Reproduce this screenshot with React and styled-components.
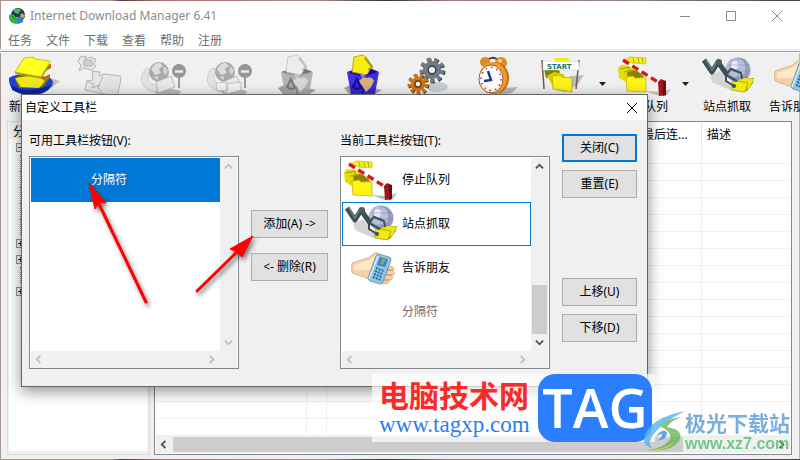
import React from "react";
import styled, { createGlobalStyle } from "styled-components";

const GlobalStyle = createGlobalStyle`
  * {
    box-sizing: border-box;
  }
  body {
    margin: 0;
    background: #a8968f;
    font-family: "Noto Sans", "Noto Sans CJK SC", sans-serif;
    font-size: 12px;
    line-height: 16px;
    color: #000;
  }
  button {
    font: inherit;
    color: inherit;
    padding: 0;
    border: none;
    background: none;
  }
  ul {
    list-style: none;
    margin: 0;
    padding: 0;
  }
`;

const Desktop = styled.div`
  position: relative;
  overflow: hidden;
  padding: 1px 0 1px 1px;
  background: linear-gradient(90deg, #a8968f 0, #a8968f 14%, #4a3b42 15%, #b06c70 20%, #a88a80 40%, #33313a 48%, #9a7a74 56%, #8d7f7c 80%, #44444a 100%);
`;

const MainWindow = styled.main`
  background: #f0f0f0;
  box-shadow: inset -1px 0 #b4b4b4;
`;

const TitleBar = styled.header`
  display: flex;
  align-items: center;
  height: 30px;
  padding-left: 7px;
  background: #fff;
  color: #8c8c8c;
`;

const WindowTitle = styled.h1`
  flex: 1;
  margin: 0 0 0 4px;
  font-size: 12px;
  font-weight: 400;
`;

const CaptionButton = styled.button`
  display: flex;
  align-items: center;
  justify-content: center;
  width: 46px;
  height: 30px;
  color: #8c8c8c;
  flex: none;
`;

const MenuBar = styled.nav`
  display: flex;
  height: 18px;
  background: #fff;
  color: #6d6d6d;
`;

const MenuButton = styled.button`
  width: 38px;
  height: 18px;
  line-height: 20px;
`;

const ToolBar = styled.div`
  display: flex;
  height: 72px;
  margin-left: -1px;
  padding-top: 3px;
  border-top: 2px solid #f0f0f0;
  box-shadow: inset 0 1px #a0a0a0, inset 0 2px #fff;
  overflow: hidden;
`;

const ToolButton = styled.button`
  flex: none;
  display: flex;
  flex-direction: column;
  align-items: center;
  gap: 1px;
  width: 66px;
  white-space: nowrap;
`;

const DropButton = styled.button`
  flex: none;
  width: 17px;
  height: 56px;
`;

const Content = styled.div`
  display: flex;
  gap: 4px;
  padding: 0 8px 4px 6px;
`;

const SidePane = styled.aside`
  flex: none;
  width: 143px;
  border: 1px solid #dcdcdc;
  padding: 0 2px 3px 1px;
`;

const PaneTitle = styled.h2`
  margin: 0;
  padding-left: 4px;
  height: 17px;
  font-size: 12px;
  line-height: 20px;
  font-weight: 400;
`;

const Tree = styled.ul`
  height: 312px;
  padding-left: 7px;
  background: #fff;
`;

const TreeRow = styled.li`
  display: flex;
  align-items: center;
  height: 16px;
  padding-left: ${(p) => (p.$node ? "0" : "4px")};

  &::before {
    content: "";
    display: ${(p) => (p.$node ? "none" : "block")};
    height: 16px;
    margin-right: 8px;
    border-left: 1px dotted #808080;
  }
`;

const Expander = styled.svg`
  margin-right: 4px;
`;

const TablePane = styled.section`
  flex: 1;
  min-width: 0;
  border: 1px solid #828790;
  padding: 1px;
  background: #fff;
`;

const DownloadTable = styled.table`
  width: 100%;
  table-layout: fixed;
  border-collapse: separate;
  border-spacing: 0;

  th {
    height: 24px;
    padding: 0 0 0 5px;
    border-right: 1px solid #e5e5e5;
    font-weight: 400;
    text-align: left;
    overflow: hidden;
    white-space: nowrap;
  }
  td {
    height: 17px;
    padding: 0;
    border-right: 1px solid #f0f0f0;
    border-bottom: 1px solid #f0f0f0;
  }
  th:last-child,
  td:last-child {
    border-right: none;
  }
`;

const ScrollX = styled.div`
  display: flex;
  align-items: center;
  height: 17px;
  background: #f0f0f0;
`;

const ScrollY = styled.div`
  display: flex;
  flex-direction: column;
  align-items: center;
  width: 17px;
  background: #f0f0f0;
`;

const ScrollButton = styled.button`
  display: flex;
  align-items: center;
  justify-content: center;
  width: 17px;
  height: 17px;
  color: ${(p) => (p.disabled ? "#bfbfbf" : "#505050")};
`;

const TrackX = styled.div`
  flex: 1;
  height: 15px;
`;

const ThumbX = styled.div`
  width: 85%;
  height: 15px;
  background: #cdcdcd;
`;

const TrackY = styled.div`
  flex: 1;
  align-self: stretch;
  display: flex;
  flex-direction: column;
  justify-content: flex-end;
  padding: 0 1px;
`;

const ThumbY = styled.div`
  height: 49px;
  background: #cdcdcd;
`;

const Dialog = styled.section`
  position: absolute;
  top: 94px;
  left: 21px;
  right: 152px;
  border: 1px solid #666;
  background: #f0f0f0;
  box-shadow: 0 4px 14px rgba(0, 0, 0, 0.45);
`;

const DialogTitleBar = styled.header`
  display: flex;
  align-items: center;
  height: 25px;
  padding-left: 3px;
  background: #fff;
`;

const DialogTitle = styled.h2`
  margin: 0;
  flex: 1;
  font-size: 12px;
  line-height: 18px;
  font-weight: 400;
`;

const DialogClose = styled.button`
  display: flex;
  align-items: center;
  justify-content: center;
  width: 31px;
  height: 25px;
`;

const DialogBody = styled.div`
  display: grid;
  grid-template-columns: 1fr 77px 1fr 75px;
  column-gap: 12px;
  padding: 12px 10px 17px 7px;
`;

const ListColumn = styled.div`
  min-width: 0;
`;

const ListLabel = styled.h3`
  margin: 0 0 6px;
  font-size: 12px;
  line-height: 18px;
  font-weight: 400;
`;

const ListFrame = styled.div`
  display: grid;
  grid-template-columns: 1fr 17px;
  grid-template-rows: 193px 17px;
  border: 1px solid #828790;
  padding: 1px 1px 0;
  background: #fff;
`;

const Corner = styled.div`
  background: #f0f0f0;
`;

const ListItem = styled.li`
  display: flex;
  align-items: center;
  height: 44px;
  border: 1px solid ${(p) => (p.$selected || p.$focused ? "#0078d7" : "transparent")};
  background: ${(p) => (p.$selected ? "#0078d7" : "transparent")};
  color: ${(p) => (p.$selected ? "#fff" : p.$muted ? "#6d6d6d" : "#000")};
`;

const ItemIcon = styled.span`
  display: flex;
  flex: none;
  width: 59px;
`;

const ButtonStack = styled.div`
  display: flex;
  flex-direction: column;
  gap: ${(p) => p.$gap};
  padding-top: ${(p) => p.$top};
`;

const PushButton = styled.button`
  height: 28px;
  border: ${(p) => (p.$primary ? "2px solid #0078d7" : "1px solid #adadad")};
  background: #e1e1e1;
`;

const Spacer = styled.div`
  height: 64px;
`;

const Arrows = styled.svg`
  position: absolute;
  left: 60px;
  top: 80px;
  filter: drop-shadow(2px 3px 2px rgba(0, 0, 0, 0.5));
  pointer-events: none;
`;

const TagMark = styled.div`
  position: absolute;
  right: 145px;
  bottom: 18px;
  display: flex;
  justify-content: space-between;
  width: 283px;
  height: 68px;
  padding: 0 3px 0 7px;
  background: rgba(255, 255, 255, 0.68);
`;

const TagName = styled.div`
  padding-top: 4px;
  font: 700 30px/32px "Noto Sans CJK SC", sans-serif;
  color: #fb2a2a;
  white-space: nowrap;
`;

const TagSite = styled.div`
  font: 400 23px/30px "Liberation Serif", serif;
  color: #2b7cf5;
`;

const TagBadge = styled.div`
  width: 114px;
  height: 68px;
  border-radius: 17px;
  background: #2b7fff;
  color: #fff;
  text-align: center;
  font: 600 54px/66px "Open Sans", sans-serif;
`;

const SiteMark = styled.div`
  position: absolute;
  right: 10px;
  bottom: 7px;
  display: flex;
  align-items: center;
  opacity: 0.8;
`;

const SiteName = styled.div`
  font: 700 21px/26px "Noto Sans CJK SC", sans-serif;
  color: #5b9bd5;
`;

const SiteUrl = styled.div`
  font: 700 16px/18px "Liberation Sans", sans-serif;
  color: #52bd72;
`;

function Icon({ children }) {
  return (
    <svg width="54" height="44" viewBox="0 0 54 44" aria-hidden="true">
      {children}
    </svg>
  );
}

function NewTaskIcon() {
  return (
    <Icon>
      <path d="M44 24 L54 27 L44 35 Z" fill="#aaa" opacity=".7" />
      <path d="M3 24 Q10 19 20 21 L42 23 Q49 26 46 32 Q38 43 20 41 Q2 38 3 24Z" fill="#2340c8" />
      <path d="M5 31 Q20 41 45 31 L42 36 Q24 45 6 36Z" fill="#10259a" />
      <path d="M9 25 L14 21 L43 25 L37 33 L13 34Z" fill="#857c00" />
      <path d="M36 24 L44 20 L44 24 L33 30Z M38 12 L45 10 L45 14 L34 20Z" fill="#c06b10" />
      <path d="M9 24 L30 21 L39 27 L33 34 L15 33Z" fill="#f0e818" />
      <path d="M9 18 L18 4 L27 3 L29 5 L44 7 L43 10 L35 23Z" fill="#ffff20" stroke="#b9b100" strokeWidth=".8" />
      <path d="M9 19 L35 24 L43 11" fill="none" stroke="#a89d00" strokeWidth="1.4" />
    </Icon>
  );
}

function ResumeIcon() {
  return (
    <Icon>
      <g fill="#e6e6e6" stroke="#b4b4b4" strokeLinejoin="round">
        <path d="M8 3 L14 2 L13 5 L19 3 L24 5 L22 10 L24 12 L20 16 L12 14 L7 17 L9 11 L6 8Z" />
        <path d="M12 6 H20 V12 H12Z" fill="#cfcfcf" />
        <path d="M20 17 L28 18 L27 22 L32 20 L48 22 L49 25 L45 43 L38 41 L13 36 L15 27 L21 26Z" />
        <path d="M31 22 L26 34 L30 38 M14 27 L22 30 L20 34 L28 31" fill="none" />
      </g>
      <path d="M33 24 L46 26 L43 39 L29 36Z" fill="#e2e2e2" />
    </Icon>
  );
}

function StopIcon({ all }) {
  return (
    <Icon>
      <path d="M7 15 Q-2 28 10 36 Q22 41 32 35 L28 30 Q16 34 11 27 Q8 21 14 14Z" fill="#e2e2e2" stroke="#c4c4c4" strokeWidth=".7" />
      <circle cx="21" cy="18" r="10" fill="#a9a9a9" />
      <path d="M13 15 Q17 8 22 9 L25 12 L21 15 L23 19 L17 21Z" fill="#dcdcdc" />
      <path d="M26 12 L30 16 L28 21 L25 18Z M15 23 L20 22 L20 26Z" fill="#d2d2d2" />
      <ellipse cx="30" cy="38" rx="13" ry="3" fill="#b9b9b9" />
      <path d="M18 28 L33 22 L37 33 L20 39Z" fill="#e9e9e9" stroke="#aaa" strokeWidth=".7" />
      {all && <path d="M12 29 L23 28 L24 36 L13 37Z M22 30 L37 28 L37 36 L23 40Z" fill="#f1f1f1" stroke="#b3b3b3" strokeWidth=".7" />}
      <path d="M41 24 V34" stroke="#888" strokeWidth="1.6" />
      <circle cx="41" cy="17" r="7" fill="#969696" />
      <path d="M37 17.500 H45" stroke="#ececec" strokeWidth="2.4" />
    </Icon>
  );
}

function BasketIcon({ full }) {
  const c = full
    ? { side: "#2416d8", back: "#16088c", paper: "#f4ef10", edge: "#b2920a", sign: "#d8b27c" }
    : { side: "#aaa", back: "#777", paper: "#ededed", edge: "#bdbdbd", sign: "#d8d8d8" };
  return (
    <Icon>
      <path d="M8 34 L16 30 L46 36 L36 42 L14 41Z" fill="#8e8e8e" opacity=".8" />
      <path d="M11 18 L20 15 L36 15 L43 18 L27 23Z" fill={c.back} />
      <path d="M18 3 L27 1 L31 4 L36 12 L31 21 L16 18Z" fill={c.paper} stroke={c.edge} strokeWidth=".8" />
      <path d="M29 4 L36 13 L32 16" fill="none" stroke={c.edge} strokeWidth="2" />
      <path d="M11 18 L27 21 L43 18 L39 40 L27 43 L15 40Z" fill={c.side} opacity=".88" />
      <path d="M27 21 V42" stroke={c.back} />
      <path d="M17 33 L21 25 L25 34 L20 35Z" fill="none" stroke={c.back} strokeWidth="2" />
      <path d="M23 27 Q28 22 31 24 Q36 22 38 27 L35 33 L30 38 L27 33Z" fill={c.sign} />
      <path d="M24 20 L30 20 L27 26Z" fill={c.sign} opacity=".7" />
    </Icon>
  );
}

// one gear, drawn as a dashed outer ring around a solid disc
function Gear({ cx, cy, r, color, shade }) {
  const tooth = (2 * Math.PI * r) / 18;
  return (
    <g>
      <circle cx={cx + 1} cy={cy + 1} r={r} fill="none" stroke={shade} strokeWidth="5" strokeDasharray={tooth} />
      <circle cx={cx} cy={cy} r={r} fill="none" stroke={color} strokeWidth="5" strokeDasharray={tooth} />
      <circle cx={cx} cy={cy} r={r - 1} fill={color} />
      <circle cx={cx} cy={cy} r={r / 2.6} fill="#f4f4f4" stroke={shade} strokeWidth="1.6" />
    </g>
  );
}

function OptionsIcon() {
  return (
    <Icon>
      <ellipse cx="35" cy="33" rx="11" ry="5" fill="#c9ccd6" />
      <Gear cx={30} cy={16} r={10} color="#6e7a88" shade="#3c434c" />
      <Gear cx={16} cy={30} r={8} color="#c9761f" shade="#7c420c" />
    </Icon>
  );
}

function SchedulerIcon() {
  return (
    <Icon>
      <path d="M34 34 L50 33 L44 39 L30 41Z" fill="#b5b5b5" />
      <path d="M19 6 Q26 1 31 7" fill="none" stroke="#444" strokeWidth="2" />
      <circle cx="17" cy="8" r="5" fill="#e08a24" />
      <circle cx="33" cy="9" r="6" fill="#e08a24" />
      <circle cx="32" cy="7" r="2" fill="#ffd08a" />
      <ellipse cx="27" cy="24" rx="14" ry="16" fill="#c8690f" />
      <ellipse cx="25" cy="24" rx="14" ry="16" fill="#ee9c35" />
      <ellipse cx="23" cy="25" rx="12" ry="14" fill="#fff" stroke="#a75c12" />
      <ellipse cx="23" cy="25" rx="10" ry="11.500" fill="none" stroke="#b04040" strokeWidth="1.6" strokeDasharray="1.600 4" />
      <path d="M20 17 L23 26 L16 27" fill="none" stroke="#173a9c" strokeWidth="2.4" />
    </Icon>
  );
}

function StartQueueIcon() {
  return (
    <Icon>
      <path d="M36 22 L50 21 L44 30 L38 34 L30 38 L22 36Z" fill="#bcbcbc" />
      <path d="M20 4 L34 4 L37 8 L22 8Z" fill="#f5ea10" />
      <path d="M10 15 L25 14 L26 21 L12 24Z" fill="#858000" />
      <path d="M13 22 L20 18 L30 20 L32 29 L18 31Z" fill="#d9cf08" />
      <path d="M18 22 L26 21 L28 23 L38 24 L38 38 L19 35Z" fill="#fbf21c" stroke="#b3a800" strokeWidth=".8" />
      <path d="M8 6 L10 35 M45 6 L42 35" stroke="#7a5f50" strokeWidth="1.6" />
      <path d="M9 7 L45 8 V16 L9 16Z" fill="#fff" stroke="#cfcfcf" strokeWidth=".6" />
      <text x="13" y="14.500" fontFamily="DejaVu Sans" fontWeight="700" fontSize="7" fill="#157a6b">START</text>
    </Icon>
  );
}

function StopQueueIcon() {
  return (
    <Icon>
      <path d="M28 37 L44 38 L54 35 L50 41 L42 42Z" fill="#bdbdbd" />
      <path d="M8 6 L13 3 L29 4 L29 10 L14 9Z" fill="#f8ee18" stroke="#c9bd00" strokeWidth=".7" />
      <path d="M16 4 L17 9 M21 4 L22 9 M25 4 L26 9" stroke="#bcae00" />
      <path d="M1 14 L4 11 L15 12 L24 18 L28 24 L9 28 L2 24Z" fill="#e6dc0a" />
      <path d="M3 15 L12 13 L12 22 M7 18 L17 16 L17 24" fill="none" stroke="#a79b00" />
      <path d="M10 18 L20 16 L27 23 L11 25Z" fill="#8b8200" />
      <path d="M9 23 L16 22 L18 24 L29 24 L29 38 L10 37Z" fill="#fff514" stroke="#b9ae00" strokeWidth=".7" />
      <path d="M6 6 L44 30" stroke="#fff" strokeWidth="3.4" />
      <path d="M6 6 L44 30" stroke="#dd1418" strokeWidth="3.4" strokeDasharray="7 4" />
      <path d="M41 28 L44 25 L49 27 L49 41 L42 42Z" fill="#a90f16" />
      <path d="M46 27 L49 27 L49 41 L46 42Z" fill="#76070d" />
      <circle cx="44" cy="31" r="1.500" fill="#444" />
    </Icon>
  );
}

function GrabberIcon() {
  return (
    <Icon>
      <path d="M10 22 L20 17 L30 30 L42 38 L30 36 L12 28Z" fill="#d4d4d4" />
      <circle cx="38" cy="16" r="12.500" fill="#979fc2" />
      <circle cx="36" cy="14" r="9.500" fill="#b9c0dc" />
      <circle cx="35" cy="11" r="4" fill="#e8ebf7" />
      <path d="M28 11 H49 M26 17 H50 M29 23 H48 M38 4 V28 M32 5 Q27 16 32 27 M44 5 Q49 16 44 27" fill="none" stroke="#7881ab" strokeWidth=".6" opacity=".7" />
      <path d="M4 6 L12 18 L18 8 L27 21" fill="none" stroke="#3c5055" strokeWidth="5" strokeLinejoin="round" />
      <path d="M6 6 L12 16 L18 6" fill="none" stroke="#6f868c" strokeWidth="1.400" />
      <circle cx="19" cy="8" r="3" fill="#4b6066" />
      <path d="M33 29 L38 25 L54 24 L53 29 L47 37 L33 35Z" fill="#a79b00" />
      <path d="M38 26 L44 24 L54 25 L49 34 L44 36Z" fill="#efe514" />
      <path d="M32 28 L38 27 L48 29 L45 38 L32 36Z" fill="#f3e912" stroke="#9f9500" strokeWidth=".7" />
      <path d="M26 20 L31 15 L41 19 L42 25 M26 20 L26 27 L34 32 M26 21 L37 27" fill="none" stroke="#3c5055" strokeWidth="2" />
      <circle cx="34" cy="32" r="2" fill="#3c5055" />
    </Icon>
  );
}

function PhoneIcon() {
  return (
    <Icon>
      <path d="M9 17 L27 11 Q33 4 36 8 L33 22 L48 20 Q53 22 50 25 Q53 28 49 30 Q51 34 46 34 Q47 38 40 38 L23 32 L9 27 Q8 21 9 17Z" fill="#f3d0a5" stroke="#d9ae84" strokeWidth=".8" />
      <path d="M11 19 L26 14 Q31 10 33 9 L27 24 L11 24Z" fill="#fde8c8" />
      <path d="M42 24 H50 M41 29 H49 M40 34 H46" stroke="#bb835a" />
      <path d="M36 8 Q34 8 33 10 L25 32 Q25 34 27 35 L37 38 Q39 38 40 36 L48 14 Q48 11 46 11Z" fill="#92c5dc" stroke="#5a8ea9" strokeWidth=".8" />
      <path d="M35 10 L26 33" stroke="#d9f0f8" strokeWidth="1.500" />
      <path d="M37 11 L45 13 L42 21 L34 19Z" fill="#2f7de0" />
      <path d="M39 12 L43 13 L40 19 L37 18Z" fill="#8ba858" />
      <path d="M33 22 L41 25 M32 25 L40 28 M31 28 L39 31 M30 31 L38 34" stroke="#2563b8" strokeWidth="1.900" strokeDasharray="2 1" />
    </Icon>
  );
}

function AppLogo() {
  return (
    <svg width="18" height="18" viewBox="0 0 18 18" aria-hidden="true">
      <circle cx="10" cy="8" r="7" fill="#173a63" />
      <path d="M5 3 Q10 0 13 3 L10 7 L7 6Z" fill="#56b947" />
      <path d="M13 6 L17 8 L15 12 L12 10Z" fill="#e6a22d" />
      <path d="M1 8 Q0 17 10 17 L11 12 Q5 13 4 7Z" fill="#2fb53c" />
      <path d="M9 10 L15 10 L15 15 L10 17Z" fill="#1f86df" />
      <path d="M5 8 Q7 12 10 11" fill="none" stroke="#b6e36b" />
    </svg>
  );
}

function Cross({ size }) {
  return (
    <svg width={size} height={size} viewBox="0 0 10 10" aria-hidden="true">
      <path d="M0 0 L10 10 M10 0 L0 10" stroke="currentColor" />
    </svg>
  );
}

const chevrons = {
  left: "M6 1 L2 5 L6 9",
  right: "M3 1 L7 5 L3 9",
  up: "M1 7 L5 3 L9 7",
  down: "M1 3 L5 7 L9 3",
};

function Scroll({ dir, disabled }) {
  return (
    <ScrollButton disabled={disabled} aria-label={dir}>
      <svg width="9" height="9" viewBox="0 0 10 10" aria-hidden="true">
        <path d={chevrons[dir]} fill="none" stroke="currentColor" strokeWidth="2" />
      </svg>
    </ScrollButton>
  );
}

function ListBox({ label, items, scrollable }) {
  return (
    <ListColumn>
      <ListLabel>{label}</ListLabel>
      <ListFrame>
        <ul role="listbox" aria-label={label}>
          {items.map((item, idx) => (
            <ListItem
              key={idx}
              role="option"
              aria-selected={!!item.selected}
              $selected={item.selected}
              $focused={item.focused}
              $muted={item.muted}
            >
              <ItemIcon>{item.icon}</ItemIcon>
              {item.text}
            </ListItem>
          ))}
        </ul>
        <ScrollY>
          <Scroll dir="up" disabled={!scrollable} />
          <TrackY>{scrollable && <ThumbY />}</TrackY>
          <Scroll dir="down" disabled={!scrollable} />
        </ScrollY>
        <ScrollX>
          <Scroll dir="left" disabled />
          <TrackX />
          <Scroll dir="right" disabled />
        </ScrollX>
        <Corner />
      </ListFrame>
    </ListColumn>
  );
}

const menus = ["任务", "文件", "下载", "查看", "帮助", "注册"];

const tools = [
  { text: "新建任务", icon: <NewTaskIcon /> },
  { text: "继续任务", icon: <ResumeIcon /> },
  { text: "停止任务", icon: <StopIcon /> },
  { text: "全部停止", icon: <StopIcon all /> },
  { text: "删除任务", icon: <BasketIcon /> },
  { text: "删除完成", icon: <BasketIcon full /> },
  { text: "选项", icon: <OptionsIcon /> },
  { text: "计划任务", icon: <SchedulerIcon /> },
  { text: "开始队列", icon: <StartQueueIcon />, drop: true },
  { text: "停止队列", icon: <StopQueueIcon />, drop: true },
  { text: "站点抓取", icon: <GrabberIcon /> },
  { text: "告诉朋友", icon: <PhoneIcon /> },
];

const tree = [
  { text: "全部任务", node: "-" },
  { text: "压缩文件" },
  { text: "文档" },
  { text: "音乐" },
  { text: "程序" },
  { text: "视频" },
  { text: "未完成", node: "+" },
  { text: "已完成", node: "+" },
  { text: "抓取项目" },
  { text: "队列", node: "+" },
];

const columns = [
  { text: "文件名", width: 151 },
  { text: "Q", width: 20 },
  { text: "大小", width: 75 },
  { text: "状态", width: 65 },
  { text: "剩余时间", width: 80 },
  { text: "传输速度", width: 90 },
  { text: "最后连...", width: 65 },
  { text: "描述" },
];

const available = [{ text: "分隔符", selected: true }];

const current = [
  { text: "停止队列", icon: <StopQueueIcon /> },
  { text: "站点抓取", icon: <GrabberIcon />, focused: true },
  { text: "告诉朋友", icon: <PhoneIcon /> },
  { text: "分隔符", muted: true },
];

function CustomizeDialog() {
  return (
    <Dialog role="dialog" aria-label="自定义工具栏">
      <DialogTitleBar>
        <DialogTitle>自定义工具栏</DialogTitle>
        <DialogClose aria-label="关闭">
          <Cross size={10} />
        </DialogClose>
      </DialogTitleBar>
      <DialogBody>
        <ListBox label="可用工具栏按钮(V):" items={available} />
        <ButtonStack $gap="15px" $top="78px">
          <PushButton>添加(A) -&gt;</PushButton>
          <PushButton>&lt;- 删除(R)</PushButton>
        </ButtonStack>
        <ListBox label="当前工具栏按钮(T):" items={current} scrollable />
        <ButtonStack $gap="8px" $top="2px">
          <PushButton $primary>关闭(C)</PushButton>
          <PushButton>重置(E)</PushButton>
          <Spacer />
          <PushButton>上移(U)</PushButton>
          <PushButton>下移(D)</PushButton>
        </ButtonStack>
      </DialogBody>
      <Arrows width="180" height="140" viewBox="0 0 180 140" aria-hidden="true">
        <path d="M64 127 L17 29" stroke="#f00" strokeWidth="3" strokeLinecap="round" />
        <path d="M7 8 L24 28 L17 27 L13 34Z" fill="#f00" stroke="#f00" />
        <path d="M115 116 L156 76" stroke="#f00" strokeWidth="3" strokeLinecap="round" />
        <path d="M171 61 L160 82 L155 77 L148 74Z" fill="#f00" stroke="#f00" />
      </Arrows>
    </Dialog>
  );
}

function App() {
  return (
    <>
      <GlobalStyle />
      <Desktop>
        <MainWindow>
          <TitleBar>
            <AppLogo />
            <WindowTitle>Internet Download Manager 6.41</WindowTitle>
            <CaptionButton aria-label="最小化">
              <svg width="10" height="10" viewBox="0 0 10 10" aria-hidden="true">
                <path d="M0 5.500 H10" stroke="currentColor" />
              </svg>
            </CaptionButton>
            <CaptionButton aria-label="最大化">
              <svg width="10" height="10" viewBox="0 0 10 10" aria-hidden="true">
                <path d="M.5 .5 H9.500 V9.500 H.5Z" fill="none" stroke="currentColor" />
              </svg>
            </CaptionButton>
            <CaptionButton aria-label="关闭">
              <Cross size={10} />
            </CaptionButton>
          </TitleBar>
          <MenuBar>
            {menus.map((menu) => (
              <MenuButton key={menu}>{menu}</MenuButton>
            ))}
          </MenuBar>
          <ToolBar>
            {tools.map((tool) => (
              <React.Fragment key={tool.text}>
                <ToolButton>
                  {tool.icon}
                  {tool.text}
                </ToolButton>
                {tool.drop && (
                  <DropButton aria-label={tool.text + "菜单"}>
                    <svg width="7" height="4" viewBox="0 0 7 4" aria-hidden="true">
                      <path d="M0 0 H7 L3.500 4Z" fill="#222" />
                    </svg>
                  </DropButton>
                )}
              </React.Fragment>
            ))}
          </ToolBar>
          <Content>
            <SidePane>
              <PaneTitle>分类</PaneTitle>
              <Tree>
                {tree.map((row) => (
                  <TreeRow key={row.text} $node={row.node}>
                    {row.node && (
                      <Expander width="9" height="9" viewBox="0 0 9 9" aria-hidden="true">
                        <rect x=".5" y=".5" width="8" height="8" fill="#f4f4f4" stroke="#919191" />
                        <path d={row.node === "+" ? "M2 4.500 H7 M4.500 2 V7" : "M2 4.500 H7"} stroke="#2b4b9b" />
                      </Expander>
                    )}
                    {row.text}
                  </TreeRow>
                ))}
              </Tree>
            </SidePane>
            <TablePane>
              <DownloadTable>
                <colgroup>
                  {columns.map((col) => (
                    <col key={col.text} width={col.width} />
                  ))}
                </colgroup>
                <thead>
                  <tr>
                    {columns.map((col) => (
                      <th key={col.text}>{col.text}</th>
                    ))}
                  </tr>
                </thead>
                <tbody>
                  {Array.from({ length: 17 }, (_, row) => (
                    <tr key={row}>
                      {columns.map((col) => (
                        <td key={col.text} />
                      ))}
                    </tr>
                  ))}
                </tbody>
              </DownloadTable>
              <ScrollX>
                <Scroll dir="left" />
                <TrackX>
                  <ThumbX />
                </TrackX>
                <Scroll dir="right" />
              </ScrollX>
            </TablePane>
          </Content>
        </MainWindow>
        <CustomizeDialog />
        <TagMark>
          <div>
            <TagName>电脑技术网</TagName>
            <TagSite>www.tagxp.com</TagSite>
          </div>
          <TagBadge>TAG</TagBadge>
        </TagMark>
        <SiteMark>
          <svg width="42" height="42" viewBox="0 0 42 42" aria-hidden="true">
            <path d="M1 28 Q6 8 42 1 Q20 12 10 25 Q4 33 9 38 Q0 36 1 28Z" fill="#58b4ea" />
            <path d="M16 16 Q24 9 38 7 Q28 11 24 17 Q42 20 36 31 Q28 43 3 40 Q22 38 27 29 Q29 21 16 16Z" fill="#69b95b" />
            <path d="M13 27 Q18 18 24 22 Q25 29 14 31 Q20 27 19 24 Q16 24 13 27Z" fill="#3f91d2" />
            <path d="M3 40 Q22 40 31 32 Q24 42 3 40Z" fill="#e1cf43" />
          </svg>
          <div>
            <SiteName>极光下载站</SiteName>
            <SiteUrl>www.xz7.com</SiteUrl>
          </div>
        </SiteMark>
      </Desktop>
    </>
  );
}

export default App;
